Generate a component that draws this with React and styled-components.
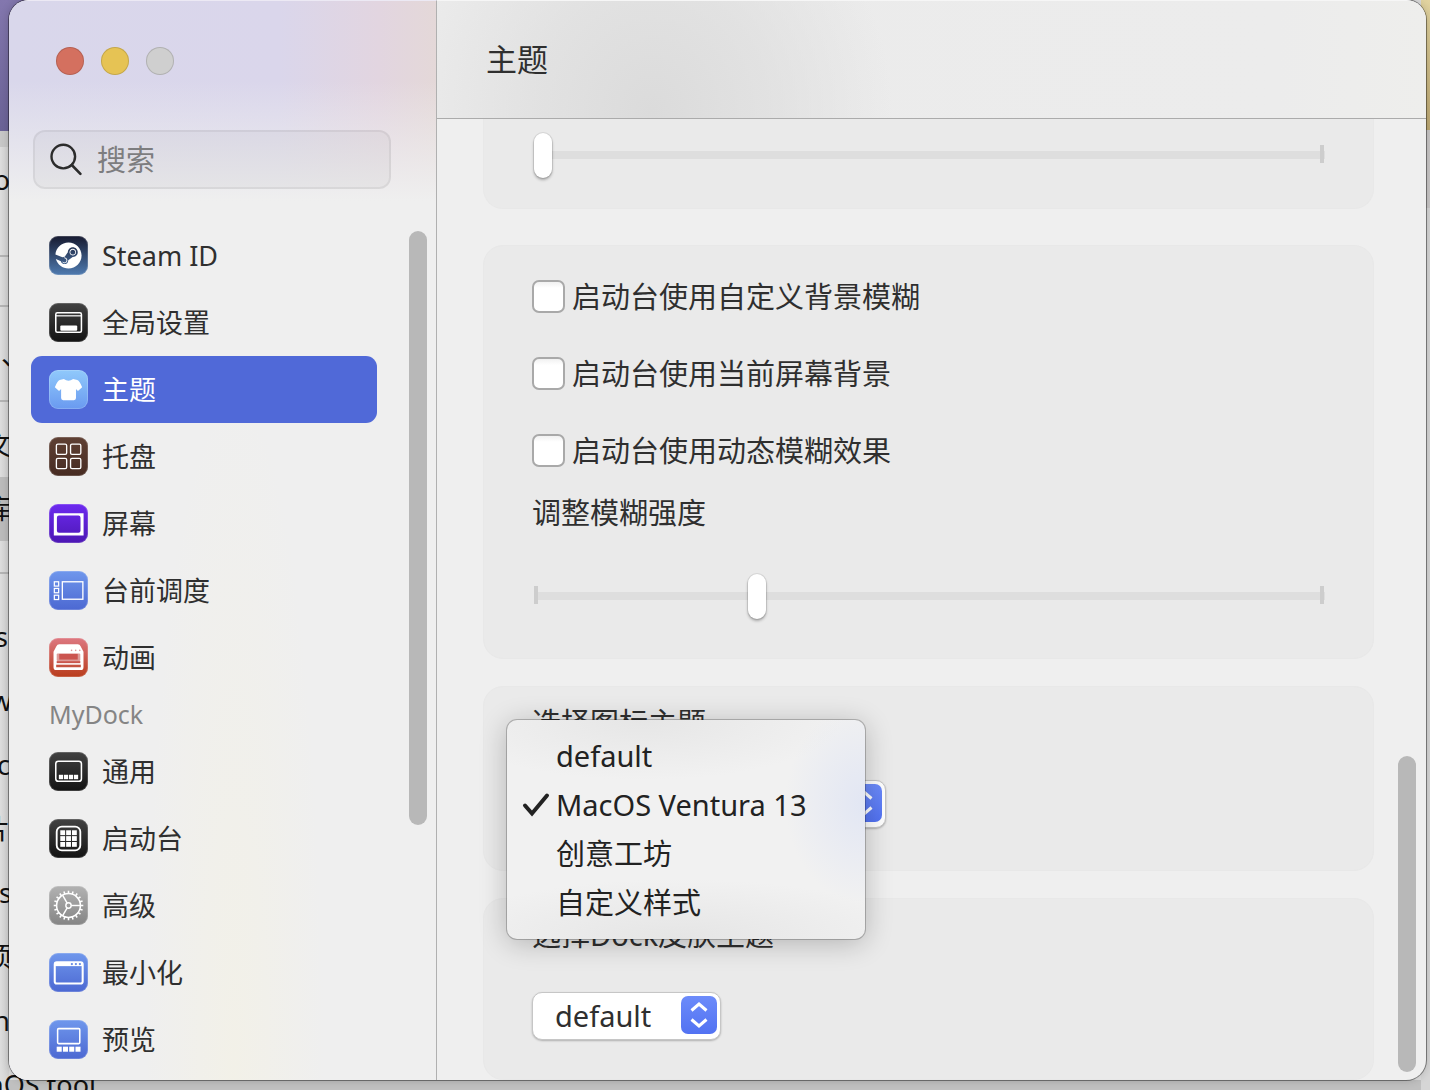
import React, { useState } from "react";
import styled, { createGlobalStyle } from "styled-components";
import { FaSteam } from "react-icons/fa";

const GlobalStyle = createGlobalStyle`
  * {
    box-sizing: border-box;
  }
  body {
    margin: 0;
    color: #2f2f2f;
    font-family: "Noto Sans", "Noto Sans CJK SC", sans-serif;
    font-size: 29px;
    line-height: 40px;
  }
  button, input, select {
    font: inherit;
    color: inherit;
  }
`;

/* ---------- desktop behind the window ---------- */

const Desktop = styled.div`
  display: grid;
  min-height: 100vh;
  overflow: hidden;
  background: #dcdcdc;
`;

const Backdrop = styled.div`
  grid-area: 1 / 1;
  display: flex;
  justify-content: space-between;
  height: 100vh;
  overflow: hidden;
  background: linear-gradient(to top, #c0c0c0 10px, transparent 10px);
`;

const FileList = styled.div`
  width: 160px;
  background: linear-gradient(to right, #dedede 0, #d2d2d2 9px, transparent 9px);
  color: #111;
  font-size: 27px;
`;

const Wallpaper = styled.div`
  height: ${({ $height }) => $height}px;
  background: ${({ $fill }) => $fill};
`;

const FileRow = styled.div`
  display: flex;
  justify-content: flex-end;
  width: ${({ $edge = 10 }) => $edge}px;
  height: ${({ $height = 64 }) => $height}px;
  line-height: ${({ $height = 64 }) => $height}px;
  background: ${({ $active }) => ($active ? "#bcbcbc" : "transparent")};
  border-bottom: ${({ $line }) => ($line ? "2px solid #b4b4b4" : "0")};
  white-space: nowrap;
`;

const RightEdge = styled.div`
  width: 9px;
  background: #d6d6d6;
`;

/* ---------- window ---------- */

const Window = styled.div`
  grid-area: 1 / 1;
  z-index: 1;
  display: grid;
  grid-template-columns: 428px minmax(0, 1fr);
  min-height: calc(100vh - 10px);
  margin: 0 4px 10px 9px;
  border-radius: 20px;
  overflow: hidden;
  background: #efefef;
  box-shadow: 0 0 0 1px rgba(0, 0, 0, 0.4), 0 0 10px rgba(0, 0, 0, 0.2);
`;

const Sidebar = styled.aside`
  display: flex;
  flex-direction: column;
  border-right: 1px solid #b0b0b0;
  border-top: 1px solid #ece9f4;
  background: radial-gradient(
      ellipse 90px 700px at 225px 100%,
      rgba(243, 241, 230, 0.8),
      rgba(243, 241, 230, 0)
    ),
    linear-gradient(to bottom, rgba(239, 239, 239, 0) 80px, #efefef 200px),
    linear-gradient(to right, #d9d7eb 0, #dad6eb 270px, #e2d5e0 370px, #e4d8d8 428px);
`;

const TrafficLights = styled.div`
  display: flex;
  gap: 17px;
  padding: 46px 47px 0;
`;

const Light = styled.button`
  width: 28px;
  height: 28px;
  padding: 0;
  border: 1px solid rgba(0, 0, 0, 0.14);
  border-radius: 50%;
  background: ${({ $color }) => $color};
`;

const SearchBox = styled.label`
  display: flex;
  align-items: center;
  gap: 15px;
  height: 59px;
  margin: 55px 45px 33px 24px;
  padding: 0 15px;
  border: 2px solid rgba(0, 0, 0, 0.06);
  border-radius: 12px;
  background: rgba(0, 0, 0, 0.03);

  svg {
    flex: none;
  }
`;

const SearchInput = styled.input`
  flex: 1;
  min-width: 0;
  padding: 0;
  border: 0;
  outline: 0;
  background: transparent;

  &::placeholder {
    color: #7d7d7f;
    opacity: 1;
  }
`;

const NavArea = styled.div`
  flex: 1;
  display: flex;
  gap: 32px;
  padding: 0 9px 0 22px;
`;

const Nav = styled.nav`
  flex: 1;
  min-width: 0;
`;

const NavItem = styled.button`
  display: flex;
  align-items: center;
  gap: 14px;
  width: 100%;
  height: 67px;
  padding: 0 18px;
  border: 0;
  border-radius: 11px;
  background: ${({ $active }) => ($active ? "#5069d8" : "transparent")};
  color: ${({ $active }) => ($active ? "#fff" : "#2f2f2f")};
  font-size: 27px;
  text-align: left;
`;

const NavHeading = styled.h2`
  height: 47px;
  margin: 0;
  padding: 0 18px;
  color: #858585;
  font-size: 25px;
  font-weight: 400;
  line-height: 47px;
`;

const IconTile = styled.span`
  display: grid;
  place-items: center;
  flex: none;
  width: 39px;
  height: 39px;
  border-radius: 9px;
  background: ${({ $fill }) => $fill};
  box-shadow: inset 0 0 0 1px rgba(255, 255, 255, 0.18);
  color: #fff;

  svg {
    display: block;
  }
`;

const ScrollTrack = styled.div`
  display: grid;
  grid-template-rows: ${({ $rows }) => $rows};
  flex: none;
  width: 18px;
`;

const ScrollThumb = styled.div`
  grid-row: 2;
  border-radius: 9px;
  background: #b8b8b8;
`;

const Main = styled.main`
  display: flex;
  flex-direction: column;
  min-width: 0;
`;

const Header = styled.header`
  height: 119px;
  padding: 38px 49px;
  border-top: 1px solid #f6f6f6;
  border-bottom: 1px solid #ababab;
  background: radial-gradient(
      ellipse 240px 260px at 215px 110px,
      #dbdbdb 0,
      rgba(222, 222, 222, 0.7) 50%,
      rgba(235, 235, 235, 0) 100%
    ),
    linear-gradient(to right, #ebebeb 0, #ececec 85%, #eeeeec 100%);
`;

const Title = styled.h1`
  margin: 0;
  font-size: 31px;
  font-weight: 400;
  line-height: 40px;
`;

const Body = styled.div`
  flex: 1;
  display: flex;
  gap: 24px;
  padding: 0 10px 0 46px;
`;

const Cards = styled.div`
  flex: 1;
  min-width: 0;
  display: flex;
  flex-direction: column;
  gap: 27px;
`;

const Card = styled.section`
  display: flex;
  flex-direction: column;
  align-items: flex-start;
  padding: 16px 48px 42px;
  border: 1px solid #e8e8e8;
  border-radius: 20px;
  background: #eaeaea;

  &:last-child {
    flex: 1;
    padding-bottom: 38px;
  }
`;

const TopCard = styled(Card)`
  margin-bottom: 9px;
  padding-top: 12px;
  padding-bottom: 31px;
  border-top: 0;
  border-radius: 0 0 20px 20px;
`;

const BlurCard = styled(Card)`
  padding-top: 34px;
  padding-bottom: 40px;
`;

const Checks = styled.div`
  display: flex;
  flex-direction: column;
  gap: 44px;
  margin-bottom: 26px;
`;

const CheckRow = styled.label`
  display: flex;
  align-items: center;
  gap: 7px;
  height: 33px;
`;

const CheckBox = styled.input`
  appearance: none;
  flex: none;
  width: 33px;
  height: 33px;
  margin: 0;
  border: 2px solid #a9a9a9;
  border-radius: 7px;
  background: linear-gradient(#f1f1f1, #fff 6px);

  &:checked {
    background: #5b7cf7;
  }
`;

const FieldLabel = styled.label`
  display: block;
  margin-bottom: ${({ $gap = 37 }) => $gap}px;
`;

const Slider = styled.input`
  appearance: none;
  display: block;
  width: calc(100% - 2px);
  height: 46px;
  margin: 0 0 0 2px;
  background: transparent;

  &::-webkit-slider-runnable-track {
    height: 18px;
    background: linear-gradient(#cdcdcd, #cdcdcd) 0 0 / 4px 18px no-repeat,
      linear-gradient(#cdcdcd, #cdcdcd) calc(100% - 1px) 0 / 4px 18px no-repeat,
      linear-gradient(#dedede, #dedede) 2px 6px / 100% 8px no-repeat;
  }

  &::-webkit-slider-thumb {
    appearance: none;
    width: 18px;
    height: 45px;
    margin-top: -12px;
    border-radius: 9px;
    background: #fff;
    box-shadow: 0 0 0 1px rgba(0, 0, 0, 0.08), 0 2px 3px rgba(0, 0, 0, 0.3);
  }
`;

const Picker = styled.div`
  position: relative;
  display: inline-grid;
  align-items: center;
  width: ${({ $width }) => $width}px;
`;

const Select = styled.select`
  grid-area: 1 / 1;
  appearance: none;
  width: 100%;
  height: 48px;
  padding: 0 60px 0 22px;
  border: 1px solid #c6c6c6;
  border-radius: 10px;
  background: #fff;
  box-shadow: 0 1px 2px rgba(0, 0, 0, 0.25);
`;

const Stepper = styled.span`
  grid-area: 1 / 1;
  justify-self: end;
  display: grid;
  place-items: center;
  width: 36px;
  height: 38px;
  margin: 0 4px 2px 0;
  border-radius: 7px;
  background: linear-gradient(#6c8bfa, #5272f2);
  pointer-events: none;
`;

const Menu = styled.div`
  position: absolute;
  top: -60px;
  left: -25px;
  z-index: 2;
  width: 358px;
  padding: 11px 0 12px;
  border-radius: 10px;
  background: radial-gradient(
      ellipse 80px 100px at 100% 38%,
      rgba(224, 229, 244, 0.9),
      rgba(241, 241, 241, 0)
    ),
    radial-gradient(ellipse 200px 60px at 38% 0, #e6e6e6, rgba(241, 241, 241, 0)),
    radial-gradient(ellipse 240px 60px at 48% 100%, #e5e5e5, rgba(241, 241, 241, 0)), #f1f1f1;
  box-shadow: 0 0 0 1px rgba(0, 0, 0, 0.22), 0 4px 28px rgba(0, 0, 0, 0.24);
`;

const MenuItem = styled.button`
  display: grid;
  grid-template-columns: 34px 1fr;
  align-items: center;
  width: 100%;
  height: 49px;
  padding: 0 15px;
  border: 0;
  background: transparent;
  color: #222;
  text-align: left;
  white-space: nowrap;
`;

const MenuText = styled.span`
  grid-column: 2;
`;

/* ---------- drawings ---------- */

const blackFill = "linear-gradient(#424242, #131313)";
const blueFill = "linear-gradient(#6f97ec, #4c68d2)";

const Glyph = ({ children }) => (
  <svg width="39" height="39" viewBox="0 0 38 38" fill="none">
    {children}
  </svg>
);

const GlobalGlyph = () => (
  <Glyph>
    <rect x="6.6" y="9.6" width="25" height="19" rx="1.5" stroke="#fff" strokeWidth="1.5" />
    <path d="M6.5 12.5h25" stroke="#fff" strokeWidth="1.2" />
    <rect x="11" y="22" width="16.5" height="5" rx="1" fill="#fff" />
  </Glyph>
);

const ShirtGlyph = () => (
  <Glyph>
    <path
      fill="#fff"
      d="M14.5 8.8Q19 12 23.5 8.8L27.6 9.8Q29.8 10.6 32.3 16.8L28.2 20.4 26.3 18.6V27.4a2 2 0 0 1-2 2H13.8a2 2 0 0 1-2-2V18.6L9.8 20.4 5.7 16.8Q8.2 10.6 10.4 9.8Z"
    />
  </Glyph>
);

const TrayGlyph = () => (
  <Glyph>
    {[7.2, 21].map((x) =>
      [7, 20.8].map((y) => (
        <rect key={`${x}-${y}`} x={x} y={y} width="10" height="10" rx="1.4" stroke="#fff" strokeWidth="1.3" />
      ))
    )}
  </Glyph>
);

const ScreenGlyph = () => (
  <Glyph>
    <path
      fill="#fff"
      fillRule="evenodd"
      d="M4.7 9h29v21.7h-29ZM9.7 11.3a2 2 0 0 0-2 2V26a2 2 0 0 0 2 2h19a2 2 0 0 0 2-2V13.3a2 2 0 0 0-2-2Z"
    />
  </Glyph>
);

const StageGlyph = () => (
  <Glyph>
    <rect x="13" y="10.5" width="20" height="17" stroke="#fff" strokeWidth="1.3" />
    {[10.5, 17, 23.6].map((y) => (
      <rect key={y} x="5.2" y={y} width="4.2" height="4.2" stroke="#fff" strokeWidth="1.2" />
    ))}
  </Glyph>
);

const MotionGlyph = () => (
  <Glyph>
    <path
      fill="#fff"
      d="M10 6h18q2 0 2.8 2l2.8 5.500V28.5a2.8 2.8 0 0 1-2.8 2.8H7.2a2.8 2.8 0 0 1-2.8-2.8V13.5L7.2 8q.8-2 2.8-2Z"
    />
    <rect x="7.5" y="15" width="23" height="7.5" rx="1" fill="#dd9b98" />
    <path d="M10 15.500h18v5.500H10Z" fill="#cb544f" />
    <path d="M7.500 22.500h23v2h-23Z" fill="#c9564c" />
    <path d="M7 26h24v2.500H7Z" fill="#c5523f" />
    {[22, 26, 30].map((x) => (
      <circle key={x} cx={x} cy="12" r=".8" fill="#df9898" />
    ))}
  </Glyph>
);

const DockGlyph = () => (
  <Glyph>
    <rect x="6.6" y="9" width="25" height="19.5" rx="2.5" stroke="#fff" strokeWidth="1.5" />
    {[9.6, 14.5, 19.4, 24.3].map((x) => (
      <rect key={x} x={x} y="22.2" width="4.1" height="4.3" fill="#fff" />
    ))}
  </Glyph>
);

const LaunchGlyph = () => (
  <Glyph>
    <rect x="7.5" y="7.5" width="23" height="23" rx="5" stroke="#fff" strokeWidth="1.8" />
    {[11, 16.7, 22.4].map((x) =>
      [11, 16.7, 22.4].map((y) => (
        <rect key={`${x}-${y}`} x={x} y={y} width="4.7" height="4.7" fill="#fff" />
      ))
    )}
  </Glyph>
);

const GearGlyph = () => (
  <Glyph>
    <circle cx="19" cy="19" r="11.6" stroke="#fff" strokeWidth="1.5" />
    <circle cx="19" cy="19" r="2.6" stroke="#fff" strokeWidth="1.4" />
    {Array.from({ length: 20 }, (_, i) => (
      <path key={i} d="M19 4.6v2.600" stroke="#fff" strokeWidth="1.5" transform={`rotate(${i * 18} 19 19)`} />
    ))}
    {[0, 120, 240].map((deg) => (
      <path key={deg} d="M21.6 19h9" stroke="#fff" strokeWidth="1.4" transform={`rotate(${deg} 19 19)`} />
    ))}
  </Glyph>
);

const MinimizeGlyph = () => (
  <Glyph>
    <rect x="5.6" y="9" width="27.2" height="20.8" rx="2" stroke="#fff" strokeWidth="2" />
    <path d="M5.5 9h27.5v3.8H5.5Z" fill="#fff" />
    {[22.3, 26.2, 30.1].map((x) => (
      <circle key={x} cx={x} cy="10.8" r="1.1" fill="#6489e4" />
    ))}
  </Glyph>
);

const PreviewGlyph = () => (
  <Glyph>
    <rect x="8.4" y="8.4" width="21.6" height="14.6" rx="1" stroke="#fff" strokeWidth="1.5" />
    {[7.5, 13.6, 19.7, 25.8].map((x) => (
      <rect key={x} x={x} y="26" width="4.9" height="4.9" fill="#fff" />
    ))}
  </Glyph>
);

const SearchIcon = () => (
  <svg width="32" height="34" viewBox="0 0 32 34" fill="none" stroke="#2c2c2c" strokeLinecap="round">
    <circle cx="13.3" cy="13.6" r="11.8" strokeWidth="2.4" />
    <path d="M21.8 22l8.600 8.800" strokeWidth="2.6" />
  </svg>
);

const CheckIcon = () => (
  <svg width="28" height="26" viewBox="0 0 28 26" fill="none">
    <path d="M3 13.5l7 8L25 3.5" stroke="#222" strokeWidth="4" strokeLinecap="round" strokeLinejoin="miter" />
  </svg>
);

const Chevrons = () => (
  <svg width="20" height="28" viewBox="0 0 20 28" fill="none" stroke="#fff" strokeWidth="3">
    <path d="M2.5 9.5L10 3l7.5 6.5M2.5 18.5L10 25l7.5-6.5" />
  </svg>
);

/* ---------- data ---------- */

const systemItems = [
  { label: "Steam ID", icon: <FaSteam size={27} />, fill: "linear-gradient(#171a30, #4f7bb0)" },
  { label: "全局设置", icon: <GlobalGlyph />, fill: blackFill },
  { label: "主题", icon: <ShirtGlyph />, fill: "linear-gradient(#90c9fb, #6a9af0)" },
  { label: "托盘", icon: <TrayGlyph />, fill: "linear-gradient(#5f4034, #472c22)" },
  { label: "屏幕", icon: <ScreenGlyph />, fill: "linear-gradient(#6d2af0, #4c17b4)" },
  { label: "台前调度", icon: <StageGlyph />, fill: blueFill },
  { label: "动画", icon: <MotionGlyph />, fill: "linear-gradient(#dd7780, #b93d1c)" },
];

const dockItems = [
  { label: "通用", icon: <DockGlyph />, fill: blackFill },
  { label: "启动台", icon: <LaunchGlyph />, fill: blackFill },
  { label: "高级", icon: <GearGlyph />, fill: "linear-gradient(#b2b2b2, #858585)" },
  { label: "最小化", icon: <MinimizeGlyph />, fill: blueFill },
  { label: "预览", icon: <PreviewGlyph />, fill: blueFill },
];

const checks = ["启动台使用自定义背景模糊", "启动台使用当前屏幕背景", "启动台使用动态模糊效果"];

const iconThemes = ["default", "MacOS Ventura 13", "创意工坊", "自定义样式"];

const NavList = ({ items, current, onPick }) =>
  items.map(({ label, icon, fill }) => (
    <NavItem key={label} type="button" $active={label === current} onClick={() => onPick(label)}>
      <IconTile $fill={fill}>{icon}</IconTile>
      {label}
    </NavItem>
  ));

const App = () => {
  const [page, setPage] = useState("主题");
  const [iconTheme, setIconTheme] = useState("MacOS Ventura 13");
  const [menuOpen, setMenuOpen] = useState(true);

  const pickTheme = (name) => {
    setIconTheme(name);
    setMenuOpen(false);
  };

  return (
    <>
      <GlobalStyle />
      <Desktop lang="zh-CN">
        <Backdrop aria-hidden="true">
          <FileList>
            <Wallpaper $height={131} $fill="linear-gradient(#8377ae, #6b6397)" />
            <Wallpaper $height={16} $fill="#c8c8c8" />
            <FileRow $height={66}>o</FileRow>
            <FileRow $height={44} $line />
            <FileRow $height={50} $line />
            <FileRow $height={95} $edge={28} $line>、</FileRow>
            <FileRow $height={11} />
            <FileRow $edge={12}>文</FileRow>
            <FileRow $edge={12} $active>库</FileRow>
            <FileRow $height={33} $line />
            <FileRow $height={31} />
            <FileRow $edge={8}>s</FileRow>
            <FileRow $edge={12}>w</FileRow>
            <FileRow>c</FileRow>
            <FileRow>片</FileRow>
            <FileRow $edge={12}>s</FileRow>
            <FileRow $edge={12}>项</FileRow>
            <FileRow>n</FileRow>
            <FileRow $edge={96}>nOS tool</FileRow>
          </FileList>
          <RightEdge>
            <Wallpaper $height={130} $fill="linear-gradient(#e2d4a0, #bda873)" />
            <Wallpaper $height={78} $fill="#c9c7c7" />
          </RightEdge>
        </Backdrop>

        <Window>
          <Sidebar>
            <TrafficLights>
              <Light type="button" aria-label="关闭" $color="#d4705f" />
              <Light type="button" aria-label="最小化窗口" $color="#e6c354" />
              <Light type="button" aria-label="缩放" $color="#cfcfcf" />
            </TrafficLights>
            <SearchBox>
              <SearchIcon />
              <SearchInput type="text" placeholder="搜索" aria-label="搜索" />
            </SearchBox>
            <NavArea>
              <Nav>
                <NavList items={systemItems} current={page} onPick={setPage} />
                <NavHeading>MyDock</NavHeading>
                <NavList items={dockItems} current={page} onPick={setPage} />
              </Nav>
              <ScrollTrack $rows="9fr 594fr 255fr">
                <ScrollThumb />
              </ScrollTrack>
            </NavArea>
          </Sidebar>

          <Main>
            <Header>
              <Title>主题</Title>
            </Header>
            <Body>
              <Cards>
                <TopCard>
                  <Slider type="range" defaultValue={0} aria-label="大小" />
                </TopCard>

                <BlurCard>
                  <Checks>
                    {checks.map((text) => (
                      <CheckRow key={text}>
                        <CheckBox type="checkbox" />
                        {text}
                      </CheckRow>
                    ))}
                  </Checks>
                  <FieldLabel htmlFor="blur" $gap={39}>
                    调整模糊强度
                  </FieldLabel>
                  <Slider id="blur" type="range" max={1000} defaultValue={277} />
                </BlurCard>

                <Card>
                  <FieldLabel htmlFor="icon-theme">选择图标主题</FieldLabel>
                  <Picker $width={354}>
                    <Select
                      id="icon-theme"
                      value={iconTheme}
                      onChange={(e) => setIconTheme(e.target.value)}
                    >
                      {iconThemes.map((name) => (
                        <option key={name}>{name}</option>
                      ))}
                    </Select>
                    <Stepper>
                      <Chevrons />
                    </Stepper>
                    {menuOpen && (
                      <Menu role="listbox" aria-label="选择图标主题">
                        {iconThemes.map((name) => (
                          <MenuItem
                            key={name}
                            type="button"
                            role="option"
                            aria-selected={name === iconTheme}
                            onClick={() => pickTheme(name)}
                          >
                            {name === iconTheme && <CheckIcon />}
                            <MenuText>{name}</MenuText>
                          </MenuItem>
                        ))}
                      </Menu>
                    )}
                  </Picker>
                </Card>

                <Card>
                  <FieldLabel htmlFor="dock-theme">选择Dock皮肤主题</FieldLabel>
                  <Picker $width={189}>
                    <Select id="dock-theme" defaultValue="default">
                      <option>default</option>
                    </Select>
                    <Stepper>
                      <Chevrons />
                    </Stepper>
                  </Picker>
                </Card>
              </Cards>
              <ScrollTrack $rows="637fr 316fr 8fr">
                <ScrollThumb />
              </ScrollTrack>
            </Body>
          </Main>
        </Window>
      </Desktop>
    </>
  );
};

export default App;
